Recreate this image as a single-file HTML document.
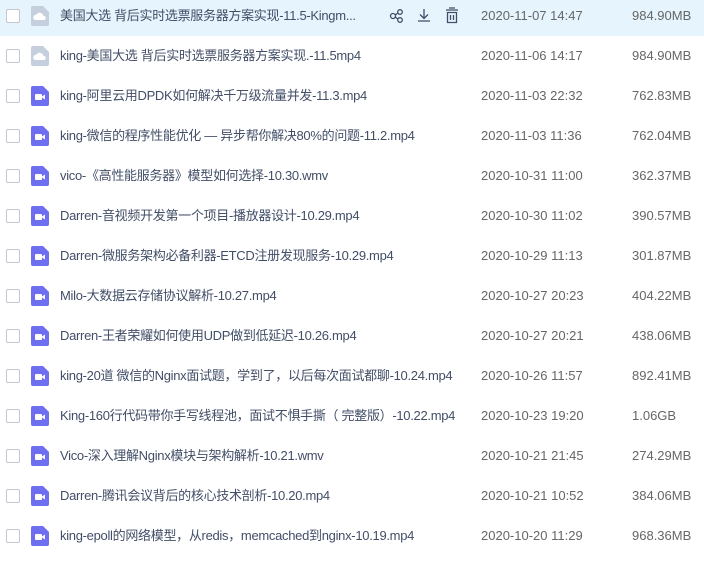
<!DOCTYPE html>
<html><head><meta charset="utf-8"><style>
body{margin:0;width:704px;height:564px;background:#fff;position:relative;overflow:hidden;font-family:"Liberation Sans","Noto Sans CJK SC",sans-serif;font-size:13px;color:#424e67}
.row{position:absolute;left:0;width:704px;height:40px;line-height:40px}
.hl{background:#e5f4fd}
.cb{position:absolute;left:6px;top:13px;width:12px;height:12px;border:1px solid #c3c7cf;border-radius:2px;background:#fff}
.ic{position:absolute;left:31px;top:10px}
.nm{position:absolute;left:60px;top:0;white-space:nowrap;letter-spacing:-0.3px}
.dt{position:absolute;left:481px;top:0;color:#666}
.sz{position:absolute;left:632px;top:0;color:#666}
</style></head><body>
<div class="row hl" style="top:-4px"></div>
<div id="c"></div>
<svg style="position:absolute;left:388px;top:6px" width="80" height="20" viewBox="0 0 80 20" fill="none" stroke="#424e67" stroke-width="1.3">
<circle cx="5" cy="10" r="2.5"/><circle cx="12" cy="6" r="2.3"/><circle cx="12" cy="14" r="2.3"/><path d="M7.3 9l2.5-2M7.3 11l2.5 2"/>
<path d="M36 3v9M32 8.5l4 4 4-4M30 15h12"/>
<path d="M58 4h12M61 2h6M59.5 6.5h9v10h-9zM62.5 9v5M65.5 9v5"/>
</svg>
<script>
var d=[
["美国大选 背后实时选票服务器方案实现-11.5-Kingm...","2020-11-07 14:47","984.90MB",0],
["king-美国大选 背后实时选票服务器方案实现.-11.5mp4","2020-11-06 14:17","984.90MB",0],
["king-阿里云用DPDK如何解决千万级流量并发-11.3.mp4","2020-11-03 22:32","762.83MB",1],
["king-微信的程序性能优化 — 异步帮你解决80%的问题-11.2.mp4","2020-11-03 11:36","762.04MB",1],
["vico-《高性能服务器》模型如何选择-10.30.wmv","2020-10-31 11:00","362.37MB",1],
["Darren-音视频开发第一个项目-播放器设计-10.29.mp4","2020-10-30 11:02","390.57MB",1],
["Darren-微服务架构必备利器-ETCD注册发现服务-10.29.mp4","2020-10-29 11:13","301.87MB",1],
["Milo-大数据云存储协议解析-10.27.mp4","2020-10-27 20:23","404.22MB",1],
["Darren-王者荣耀如何使用UDP做到低延迟-10.26.mp4","2020-10-27 20:21","438.06MB",1],
["king-20道 微信的Nginx面试题，学到了，以后每次面试都聊-10.24.mp4","2020-10-26 11:57","892.41MB",1],
["King-160行代码带你手写线程池，面试不惧手撕（ 完整版）-10.22.mp4","2020-10-23 19:20","1.06GB",1],
["Vico-深入理解Nginx模块与架构解析-10.21.wmv","2020-10-21 21:45","274.29MB",1],
["Darren-腾讯会议背后的核心技术剖析-10.20.mp4","2020-10-21 10:52","384.06MB",1],
["king-epoll的网络模型，从redis，memcached到nginx-10.19.mp4","2020-10-20 11:29","968.36MB",1]];
var h="";
d.forEach(function(r,i){
var ic=r[3]?'<svg class="ic" width="18" height="20"><path d="M2 0h10l6 6v12a2 2 0 0 1-2 2H2a2 2 0 0 1-2-2V2a2 2 0 0 1 2-2z" fill="#6d6ef0"/><rect x="4" y="8" width="7" height="6" rx="1" fill="#fff"/><path d="M11 10.5l3-2v5l-3-2z" fill="#fff"/></svg>'
:'<svg class="ic" width="18" height="20"><path d="M2 0h10l6 6v12a2 2 0 0 1-2 2H2a2 2 0 0 1-2-2V2a2 2 0 0 1 2-2z" fill="#c5cfdd"/><path d="M4.5 14a2.5 2.5 0 0 1 .5-5 4 4 0 0 1 7.5 1 2 2 0 0 1 .5 4z" fill="#fff"/></svg>';
h+='<div class="row" style="top:'+(-4+40*i)+'px"><div class="cb"></div>'+ic+'<div class="nm">'+r[0]+'</div><div class="dt">'+r[1]+'</div><div class="sz">'+r[2]+'</div></div>';
});
document.getElementById("c").innerHTML=h;
</script>
</body></html>
